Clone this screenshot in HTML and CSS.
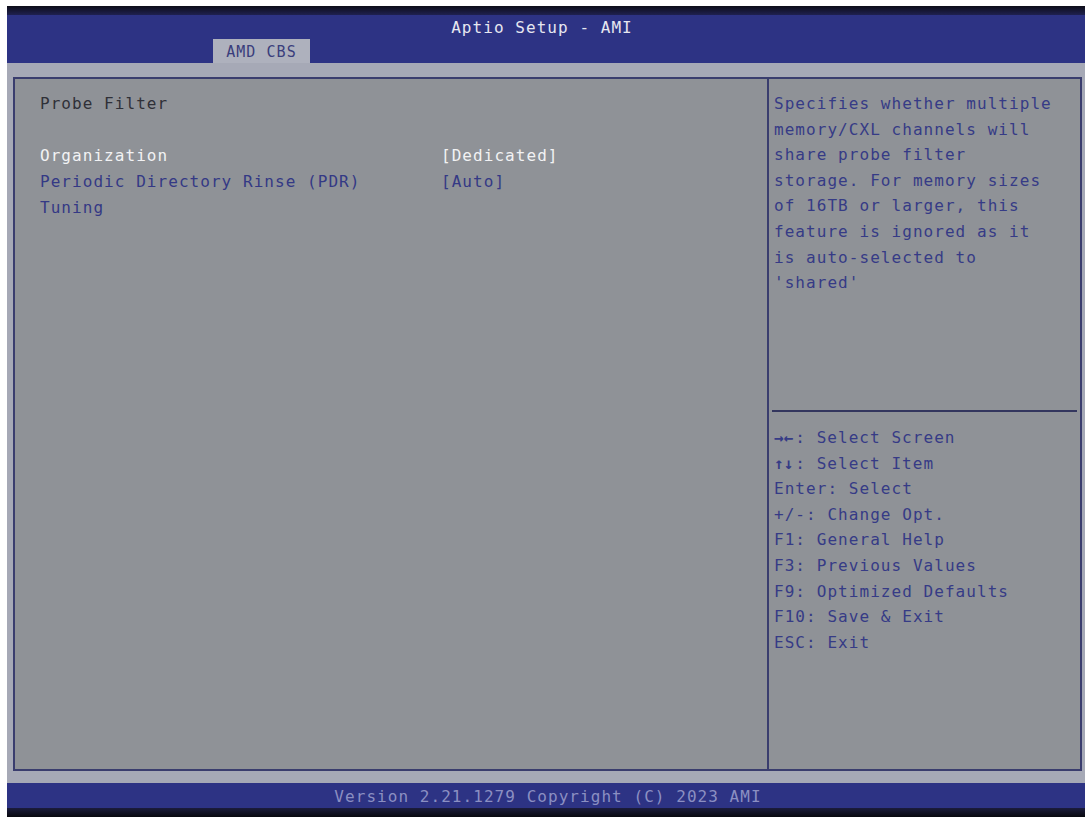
FILE: index.html
```html
<!DOCTYPE html>
<html lang="en">
<head>
	<meta charset="UTF-8" />
	<title>Aptio Setup - AMI</title>
	<link rel="stylesheet" href="styles.css">
</head>
<body>
	<div class="screen">
		<div class="topEdge"></div>
		<div class="header">
			<div class="title">Aptio Setup - AMI</div>
			<div class="tab">AMD CBS</div>
		</div>
		<div class="strip">
			<div class="panel">
				<div class="menu">
					<p class="heading">Probe Filter</p>
					<p class="blank">&nbsp;</p>
					<div class="items">
						<span class="label selected">Organization</span>
						<span class="value selected">[Dedicated]</span>
						<span class="label">Periodic Directory Rinse (PDR)</span>
						<span class="value">[Auto]</span>
						<span class="label">Tuning</span>
						<span class="value"></span>
					</div>
				</div>
				<div class="side">
					<div class="help">
						<p>Specifies whether multiple</p>
						<p>memory/CXL channels will</p>
						<p>share probe filter</p>
						<p>storage. For memory sizes</p>
						<p>of 16TB or larger, this</p>
						<p>feature is ignored as it</p>
						<p>is auto-selected to</p>
						<p>'shared'</p>
					</div>
					<hr class="rule" />
					<div class="keys">
						<p><span class="arrows">&rarr;&larr;</span>: Select Screen</p>
						<p><span class="arrows">&uarr;&darr;</span>: Select Item</p>
						<p>Enter: Select</p>
						<p>+/-: Change Opt.</p>
						<p>F1: General Help</p>
						<p>F3: Previous Values</p>
						<p>F9: Optimized Defaults</p>
						<p>F10: Save &amp; Exit</p>
						<p>ESC: Exit</p>
					</div>
				</div>
			</div>
		</div>
		<div class="footer">Version 2.21.1279 Copyright (C) 2023 AMI</div>
		<div class="bottomEdge"></div>
	</div>
</body>
</html>
```

FILE: styles.css
```css
*{
	margin: 0;padding: 0;
	box-sizing: border-box;
}
body{
	background: #fff;
	font-family: "DejaVu Sans Mono", "Liberation Mono", monospace;
	font-size: 16px;
	letter-spacing: 1.05px;
}
p{
	white-space: pre;
}

.screen{
	width: 1078px;
	height: 811px;
	margin: 6px 0 0 7px;
	display: flex;
	flex-direction: column;
}
.topEdge{
	height: 9px;
	background: linear-gradient(#0d0d18, #1f2150);
}
.bottomEdge{
	height: 9px;
	background: linear-gradient(#1b1c3c, #08080e);
}

/* title bar with the one tab */
.header{
	height: 48px;
	padding-top: 2px;
	background: #2d3384;
	display: flex;
	flex-direction: column;
}
.title{
	height: 22px;line-height: 22px;
	text-align: center;
	padding-right: 8px;
	color: #e6e7f0;
}
.tab{
	align-self: flex-start;
	margin-left: 206px;
	width: 97px;height: 24px;
	line-height: 26px;
	text-align: center;
	background: #aeb1bd;
	color: #3a3e7c;
	font-size: 15px;
}

.strip{
	padding: 14px 3px 12px 6px;
	background: #a6a9b6;
}
.panel{
	display: flex;
	height: 694px;
	border: 2px solid #3a3d6e;
	background: #8f9297;
}

/* left column: settings */
.menu{
	width: 754px;
	padding: 12px 0 0 25px;
	border-right: 2px solid #3a3d6e;
	line-height: 26px;
}
.heading{
	color: #2f3038;
}
.items{
	display: grid;
	grid-template-columns: 401px auto;
}
.label,.value{
	color: #343985;
}
.selected{
	color: #f2f2f4;
}

/* right column: help and keys */
.side{
	flex: 1;
	display: flex;
	flex-direction: column;
	line-height: 25.6px;
	color: #363b86;
}
.help{
	height: 331px;
	padding: 12px 0 0 5px;
}
.rule{
	border: none;
	border-top: 2px solid #33365e;
	margin: 0 3px 0 3px;
}
.keys{
	padding: 13px 0 0 5px;
}
.arrows{
	font-weight: bold;
	letter-spacing: 0;
	margin-right: 2px;
}

.footer{
	height: 25px;line-height: 22px;
	padding: 3px 0 0 4px;
	background: #2d3384;
	color: #8b8fc2;
	text-align: center;
}
```
